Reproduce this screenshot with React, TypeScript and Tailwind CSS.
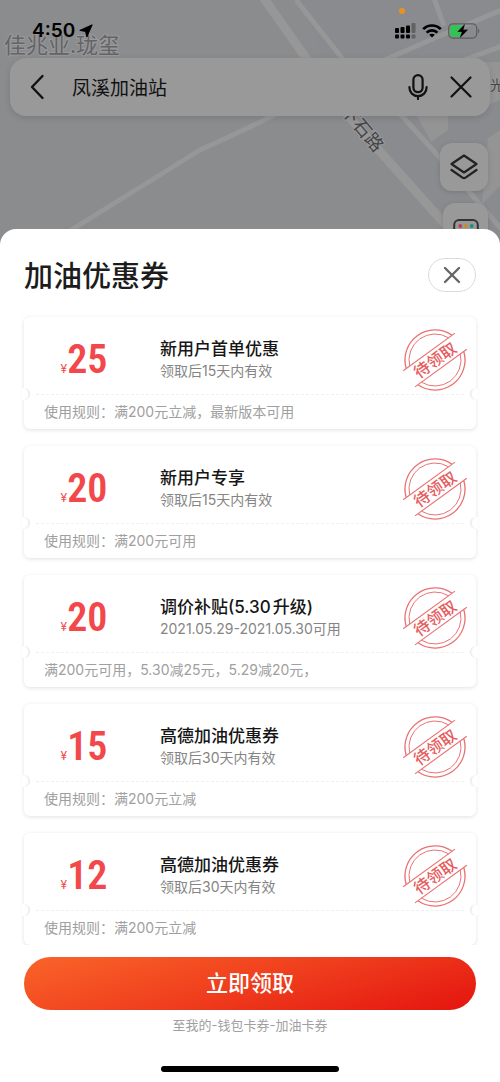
import { X } from 'lucide-react'

const coupons = [
  { id: 1, amount: 25, title: '新用户首单优惠', validity: '领取后15天内有效', rule: '使用规则：满200元立减，最新版本可用' },
  { id: 2, amount: 20, title: '新用户专享', validity: '领取后15天内有效', rule: '使用规则：满200元可用' },
  { id: 3, amount: 20, title: '调价补贴(5.30升级)', validity: '2021.05.29-2021.05.30可用', rule: '满200元可用，5.30减25元，5.29减20元，' },
  { id: 4, amount: 15, title: '高德加油优惠券', validity: '领取后30天内有效', rule: '使用规则：满200元立减' },
  { id: 5, amount: 12, title: '高德加油优惠券', validity: '领取后30天内有效', rule: '使用规则：满200元立减' },
]

function MapBackdrop() {
  return (
    <svg className="absolute left-0 top-0 h-[250px] w-[500px]" viewBox="0 0 500 250" aria-hidden="true">
      <rect width="500" height="250" fill="#8b8c8e" />
      <path d="M300 0H500V250H470L400 170L342 100Z" fill="#898b8e" />
      <path d="M415 112H448V130L431 142ZM488 138L500 130V186L482 204ZM482 62H500V100L486 106Z" fill="#949494" />
      <g fill="none" stroke="#979798" strokeLinejoin="round">
        <path d="M263 -3L306 58L350 118L452 232" strokeWidth="9" />
        <path d="M296 0L342 58L403 117L440 158L504 232" strokeWidth="5" />
        <path d="M434 -2L444 26" strokeWidth="5" />
        <path d="M502 10L437 37L387 59L250 127L200 150L68 232" strokeWidth="5" />
        <path d="M502 46L464 60" strokeWidth="5" />
      </g>
      <g fill="#636467" stroke="#9a9a9b" strokeWidth="2" paintOrder="stroke" className="font-['Noto_Sans_CJK_SC',sans-serif]">
        <text x="4" y="53" fontSize="22">佳兆业.珑玺</text>
        <g fill="#434446">
          <text x="490" y="90" fontSize="14">光</text>
          <text x="-27" y="7" fontSize="18" transform="translate(363 128) rotate(50)">下石路</text>
        </g>
      </g>
    </svg>
  )
}

function StatusBar() {
  return (
    <div className="relative flex h-[58px] items-center justify-between pl-8 pr-5 pt-1 text-black">
      <div className="flex items-center gap-1">
        <span className="text-[19px] font-semibold">4:50</span>
        <svg className="h-[14px] w-[14px]" viewBox="0 0 14 14" aria-hidden="true">
          <path d="M13.2 .8L7.8 13L6.6 7.4L.8 6.4Z" fill="currentColor" stroke="currentColor" strokeLinejoin="round" />
        </svg>
      </div>
      <svg className="absolute right-[94px] top-[7px] h-2 w-2" viewBox="0 0 8 8" aria-hidden="true">
        <circle cx="4" cy="4" r="3" fill="#e8931f" />
      </svg>
      <div className="flex items-center gap-[6px]">
        <svg className="h-[16px] w-[21px]" viewBox="0 0 21 16" fill="currentColor" aria-hidden="true">
          <rect x="0" y="5" width="4" height="5" rx="1" />
          <rect x="5.5" y="4" width="4" height="6" rx="1" />
          <rect x="11" y="2.5" width="4" height="7.5" rx="1" />
          <rect x="16.5" y="0" width="4" height="10" rx="1" opacity=".3" />
          <rect x="0" y="11.5" width="4" height="4" rx="1" />
          <rect x="5.5" y="11.5" width="4" height="4" rx="1" />
          <rect x="11" y="11.5" width="4" height="4" rx="1" />
          <rect x="16.5" y="11.5" width="4" height="4" rx="1" opacity=".3" />
        </svg>
        <svg className="h-[14px] w-[20px]" viewBox="0 0 20 14" fill="none" stroke="currentColor" strokeWidth="2.6" aria-hidden="true">
          <path d="M1.2 5.2C6 .2 14 .2 18.8 5.2" />
          <path d="M4.6 8.6C7.6 5.6 12.4 5.6 15.4 8.6" />
          <path d="M10 13.6L7.2 10.8C8.8 9.3 11.2 9.3 12.8 10.8Z" fill="currentColor" stroke="none" />
        </svg>
        <svg className="h-[16px] w-[32px]" viewBox="0 0 32 16" aria-hidden="true">
          <rect x=".7" y=".9" width="28" height="14.2" rx="4" fill="none" stroke="#5b5c5e" strokeWidth="1.2" />
          <path d="M4.5 2.4H14V13.6H4.5A2.3 2.3 0 0 1 2.2 11.3V4.7A2.3 2.3 0 0 1 4.5 2.4Z" fill="#2fc552" />
          <path d="M30.2 5.6C31.8 6.4 31.8 9.6 30.2 10.4Z" fill="#5b5c5e" />
          <path d="M17.4 .3L9 9H13.6L11.4 15.7L20.4 6.6H15.6Z" fill="currentColor" stroke="#8b8c8e" strokeWidth=".4" />
        </svg>
      </div>
    </div>
  )
}

function SearchBar() {
  return (
    <div className="relative mx-[10px] flex h-[58px] items-center rounded-2xl bg-[#999999] px-4 text-[#111] shadow-[0_2px_6px_rgba(0,0,0,0.12)]">
      <button type="button" aria-label="返回">
        <svg className="h-[26px] w-[22px]" viewBox="0 0 22 26" fill="none" stroke="currentColor" strokeWidth="2.4" strokeLinecap="round" strokeLinejoin="round" aria-hidden="true">
          <path d="M16.5 2L6 13L16.5 24" />
        </svg>
      </button>
      <input
        type="text"
        aria-label="搜索地点"
        defaultValue="凤溪加油站"
        className="ml-6 min-w-0 flex-1 bg-transparent pt-1 text-[19px] outline-none"
      />
      <button type="button" aria-label="语音搜索" className="mr-5">
        <svg className="h-[26px] w-[20px]" viewBox="0 0 20 26" fill="none" stroke="currentColor" strokeWidth="2.2" strokeLinecap="round" aria-hidden="true">
          <rect x="5.4" y="1.2" width="9.2" height="17" rx="4.6" />
          <path d="M1.4 13.2C1.4 18.6 5 22 10 22S18.6 18.6 18.6 13.2M10 22V25" />
        </svg>
      </button>
      <button type="button" aria-label="清除">
        <svg className="h-[26px] w-[26px]" viewBox="0 0 26 26" stroke="currentColor" strokeWidth="2.2" strokeLinecap="round" aria-hidden="true">
          <path d="M3.5 3.5L22.5 22.5M22.5 3.5L3.5 22.5" />
        </svg>
      </button>
    </div>
  )
}

function MapControls() {
  return (
    <div className="relative flex h-[113px] flex-col items-end gap-3 pr-3 pt-[27px]">
      <button type="button" aria-label="图层" className="flex h-12 w-12 shrink-0 items-center justify-center rounded-xl bg-[#999999] text-[#222] shadow-[0_1px_5px_rgba(0,0,0,0.14)]">
        <svg className="h-[26px] w-[28px]" viewBox="0 0 28 26" fill="none" stroke="currentColor" strokeWidth="2.2" strokeLinecap="round" strokeLinejoin="round" aria-hidden="true">
          <path d="M14 1.5L26.5 10L14 18.5L1.5 10Z" />
          <path d="M1.5 16L12.5 23.6Q14 24.6 15.5 23.6L26.5 16" />
        </svg>
      </button>
      <button type="button" aria-label="更多工具" className="flex h-12 w-[45px] shrink-0 justify-center rounded-xl bg-[#999999] pt-4 text-[#333] shadow-[0_1px_5px_rgba(0,0,0,0.14)]">
        <svg className="h-[16px] w-[26px]" viewBox="0 0 26 16" aria-hidden="true">
          <rect x="1.2" y="1" width="23.6" height="14" rx="5" fill="none" stroke="currentColor" strokeWidth="2" />
          <circle cx="7.3" cy="7" r="1.9" fill="#c23a55" />
          <circle cx="13" cy="7" r="1.9" fill="#c98a1c" />
          <circle cx="18.7" cy="7" r="1.9" fill="#1b8f80" />
        </svg>
      </button>
    </div>
  )
}

function Stamp() {
  return (
    <svg className="h-[66px] w-[66px]" viewBox="-33 -33 66 66" role="img" aria-label="待领取">
      <g transform="rotate(-36)" fill="none" stroke="#ea7173">
        <path d="M-28.3 -10A30 30 0 0 1 28.3 -10" strokeWidth="1.3" />
        <path d="M-24 -10A26 26 0 0 1 24 -10" strokeWidth=".9" />
        <path d="M-32 -10H32M-32 10H32" strokeWidth="1.1" />
        <path d="M-28.3 10A30 30 0 0 0 28.3 10" strokeWidth="1.3" />
        <path d="M-24 10A26 26 0 0 0 24 10" strokeWidth=".9" />
        <text x="0" y="6" textAnchor="middle" fontSize="16" fontWeight="500" fill="#e65c5e" stroke="none">待领取</text>
      </g>
    </svg>
  )
}

function CouponCard({ coupon }: { coupon: (typeof coupons)[number] }) {
  return (
    <li className="relative h-28 shrink-0 rounded-md bg-white shadow-[0_1px_4px_rgba(0,0,0,0.12)]">
      <div className="flex h-[77px] items-center pr-2">
        <div className="flex w-30 items-baseline justify-center pt-2 text-[#f2484b]">
          <span className="text-[12px]">¥</span>
          <span className="font-['Noto_Sans_ExtraCondensed','Roboto_Condensed',Roboto,sans-serif] text-[40px] font-semibold leading-10">{coupon.amount}</span>
        </div>
        <div className="ml-4 min-w-0 flex-1 pt-[6px]">
          <h3 className="text-[17px] font-medium leading-6 text-[#161616] [text-autospace:normal]">{coupon.title}</h3>
          <p className="text-sm leading-5 text-[#858585]">{coupon.validity}</p>
        </div>
        <div className="pt-2">
          <Stamp />
        </div>
      </div>
      <div className="mx-3 border-t border-dashed border-[#f0f0f0]" />
      <p className="truncate px-5 pt-[7px] text-sm leading-5 text-[#a0a0a0]">{coupon.rule}</p>
      <span className="absolute -left-[2px] top-[71px] h-3 w-2 rounded-r-full bg-white shadow-[inset_-2px_0_2px_-1px_rgba(0,0,0,0.12)]" />
      <span className="absolute -right-[2px] top-[71px] h-3 w-2 rounded-l-full bg-white shadow-[inset_2px_0_2px_-1px_rgba(0,0,0,0.12)]" />
    </li>
  )
}

export default function App() {
  return (
    <div className="relative flex h-screen flex-col overflow-hidden bg-[#8b8c8e] font-[Inter,'Noto_Sans_CJK_SC',sans-serif]">
      <MapBackdrop />
      <StatusBar />
      <SearchBar />
      <MapControls />

      <section className="relative flex min-h-0 flex-1 flex-col rounded-t-2xl bg-white">
        <header className="flex items-center justify-between px-6 pt-6">
          <h2 className="pt-1 text-[29px] font-medium leading-10 text-[#1c1c1c]">加油优惠券</h2>
          <button type="button" aria-label="关闭" className="flex h-[34px] w-12 items-center justify-center rounded-full border border-[#dcdcdc] text-[#666]">
            <X className="h-7 w-7" strokeWidth={2} />
          </button>
        </header>

        <ul className="mt-4 flex min-h-0 flex-1 flex-col gap-[17px] overflow-y-auto px-6 pt-1 [scrollbar-width:none]">
          {coupons.map((coupon) => (
            <CouponCard key={coupon.id} coupon={coupon} />
          ))}
        </ul>

        <footer className="flex flex-col items-center px-6 pb-[10px] pt-3">
          <button type="button" className="h-[53px] w-full rounded-full bg-[linear-gradient(165deg,#fa6429_0%,#ee3a1c_55%,#e4140f_100%)] text-[22px] font-medium text-white">
            立即领取
          </button>
          <p className="mt-[5px] text-[13px] leading-5 text-[#a0a0a0]">至我的-钱包卡券-加油卡券</p>
          <div className="mt-[31px] h-[6px] w-[178px] rounded-full bg-black" />
        </footer>
      </section>
    </div>
  )
}
